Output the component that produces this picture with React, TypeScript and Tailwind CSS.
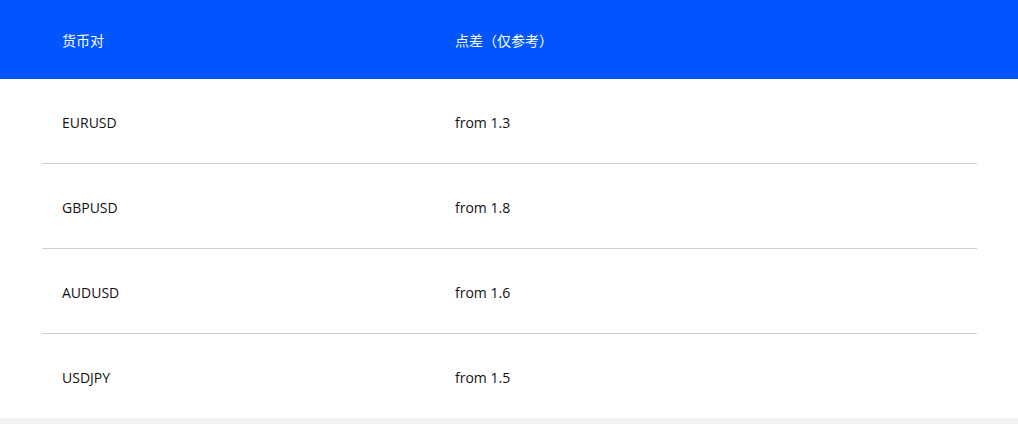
const rows = [
  { pair: "EURUSD", spread: "from 1.3" },
  { pair: "GBPUSD", spread: "from 1.8" },
  { pair: "AUDUSD", spread: "from 1.6" },
  { pair: "USDJPY", spread: "from 1.5" },
];

export default function App() {
  return (
    <div
      className="w-[1018px] h-[424px] bg-[#f2f2f2] overflow-hidden"
      style={{ fontFamily: '"Open Sans", "Noto Sans CJK SC", sans-serif' }}
    >
      <div className="bg-white">
        {/* Header */}
        <div className="bg-[#0055ff] h-[79px] pl-[42px]">
          <div className="flex h-full w-[935px] items-center pt-[1px] text-white text-[14px]">
            <div className="w-[393px] pl-5">货币对</div>
            <div className="flex-1 pl-5">点差（仅参考）</div>
          </div>
        </div>

        {/* Body */}
        <div className="pl-[42px]">
          {rows.map((row, i) => (
            <div
              key={row.pair}
              className={
                i < rows.length - 1
                  ? "flex w-[935px] h-[85px] items-center pt-[2px] border-b border-[#d0d0d0] text-[14px] text-[#111]"
                  : "flex w-[935px] h-[84px] items-center pt-[2px] text-[14px] text-[#111]"
              }
            >
              <div className="w-[393px] pl-5">{row.pair}</div>
              <div className="flex-1 pl-5">{row.spread}</div>
            </div>
          ))}
        </div>
      </div>
    </div>
  );
}
